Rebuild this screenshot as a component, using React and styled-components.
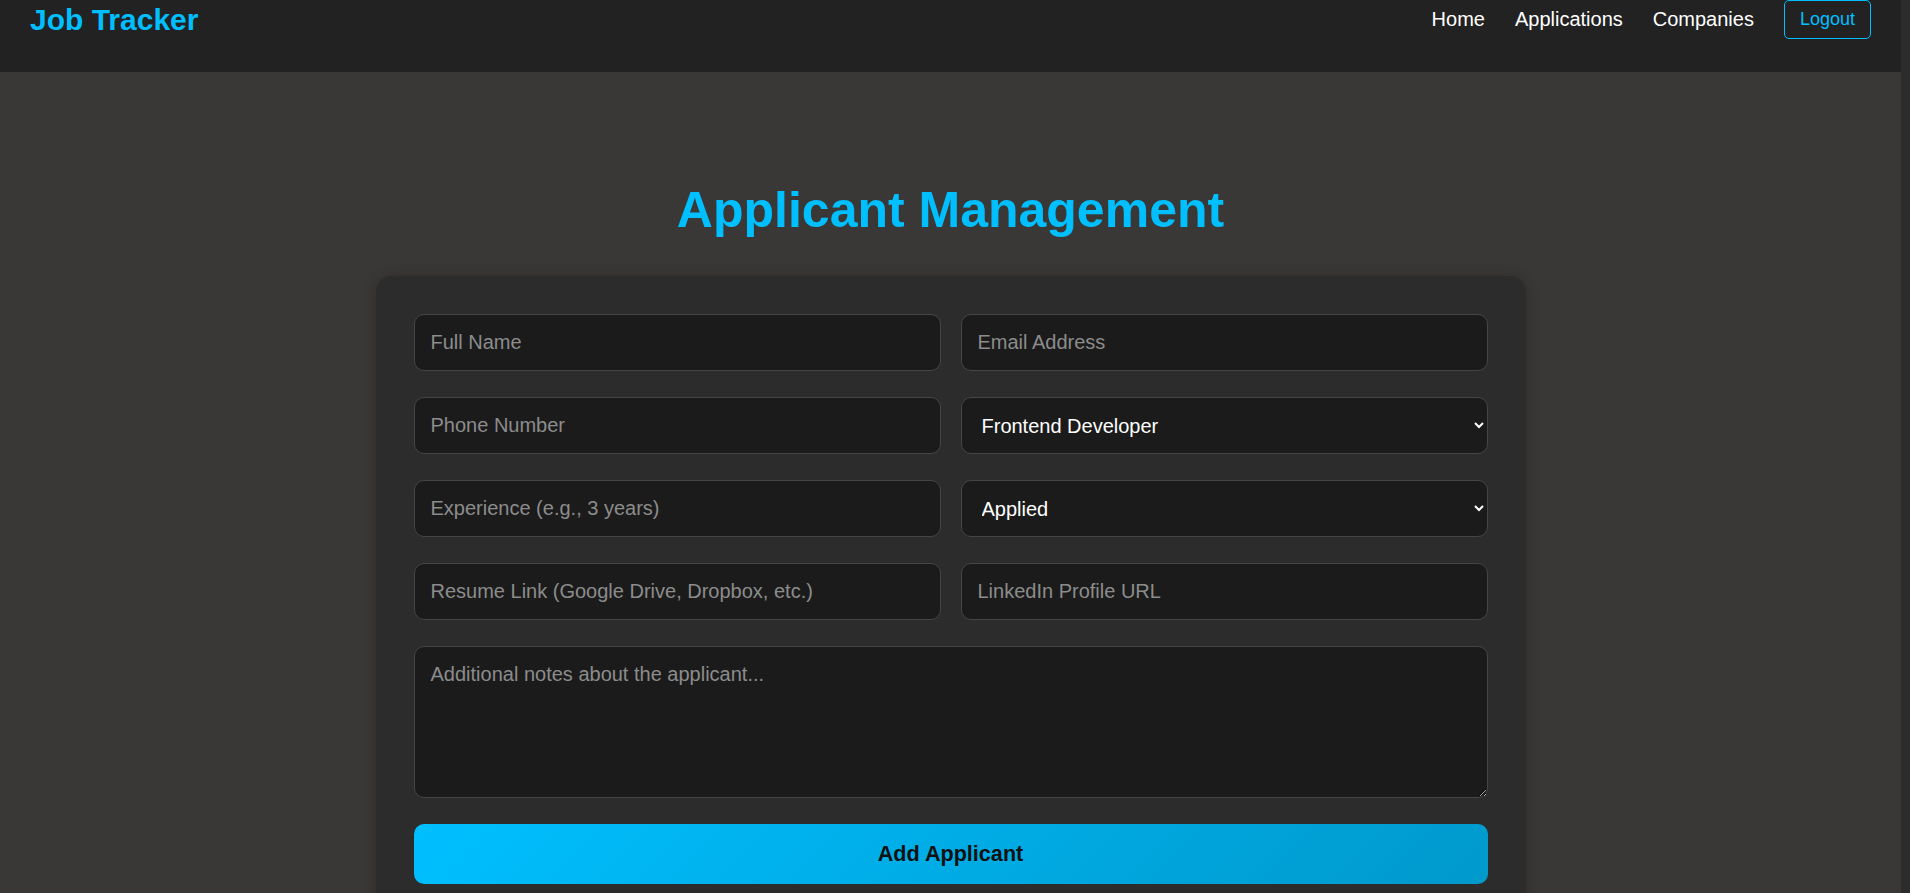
import React, { useState } from "react";
import styled, { createGlobalStyle } from "styled-components";

const GlobalStyle = createGlobalStyle`
    html {
        background-color: #2c2c2c;
    }
    body {
        margin: 0 9px 0 0;
        padding: 0;
        background-color: #3a3836;
        font-family: "Liberation Sans", Arial, sans-serif;
    }
    * {
        box-sizing: border-box;
    }
`;

const roles = ["Frontend Developer", "Backend Developer", "Full Stack Developer", "UI/UX Designer", "DevOps Engineer"];
const statuses = ["Applied", "Interviewing", "Offered", "Hired", "Rejected"];

const App = () => {
    const [form, setForm] = useState({
        name: "",
        email: "",
        phone: "",
        role: roles[0],
        experience: "",
        status: statuses[0],
        resume: "",
        linkedin: "",
        notes: "",
    });

    const update = (key) => (e) => setForm({...form, [key]: e.target.value});

    const submit = (e) => {
        e.preventDefault();
    };

    return (
        <StyledPage>
            <GlobalStyle/>
            <StyledNav>
                <StyledLogo>Job Tracker</StyledLogo>
                <StyledLinks>
                    <StyledLink href="#">Home</StyledLink>
                    <StyledLink href="#">Applications</StyledLink>
                    <StyledLink href="#">Companies</StyledLink>
                    <StyledLogout type="button">Logout</StyledLogout>
                </StyledLinks>
            </StyledNav>
            <StyledMain>
                <StyledTitle>Applicant Management</StyledTitle>
                <StyledCard>
                    <StyledForm onSubmit={submit}>
                        <StyledInput placeholder="Full Name" value={form.name} onChange={update("name")}/>
                        <StyledInput placeholder="Email Address" value={form.email} onChange={update("email")}/>
                        <StyledInput placeholder="Phone Number" value={form.phone} onChange={update("phone")}/>
                        <StyledSelect value={form.role} onChange={update("role")}>
                            {roles.map((r) => <option key={r}>{r}</option>)}
                        </StyledSelect>
                        <StyledInput placeholder="Experience (e.g., 3 years)" value={form.experience}
                                     onChange={update("experience")}/>
                        <StyledSelect value={form.status} onChange={update("status")}>
                            {statuses.map((s) => <option key={s}>{s}</option>)}
                        </StyledSelect>
                        <StyledInput placeholder="Resume Link (Google Drive, Dropbox, etc.)" value={form.resume}
                                     onChange={update("resume")}/>
                        <StyledInput placeholder="LinkedIn Profile URL" value={form.linkedin}
                                     onChange={update("linkedin")}/>
                        <StyledTextarea placeholder="Additional notes about the applicant..." value={form.notes}
                                        onChange={update("notes")}/>
                        <StyledSubmit type="submit">Add Applicant</StyledSubmit>
                    </StyledForm>
                </StyledCard>
            </StyledMain>
        </StyledPage>
    );
};

export default App;

const StyledPage = styled.div`
    min-height: 3270px;
    background-color: #3a3836;
`;

const StyledNav = styled.nav`
    height: 72px;
    padding: 0 30px;
    background-color: #222222;
    display: flex;
    justify-content: space-between;
    align-items: flex-start;
`;

const StyledLogo = styled.h1`
    margin: 0;
    height: 39px;
    display: flex;
    align-items: center;
    font-size: 30px;
    font-weight: bold;
    color: #00bfff;
`;

const StyledLinks = styled.div`
    height: 39px;
    display: flex;
    align-items: center;
    gap: 30px;
`;

const StyledLink = styled.a`
    font-size: 20px;
    color: #ffffff;
    text-decoration: none;
`;

const StyledLogout = styled.button`
    padding: 8px 15px;
    font-family: "Liberation Sans", Arial, sans-serif;
    font-size: 18px;
    color: #00bfff;
    background: transparent;
    border: 1px solid #00bfff;
    border-radius: 5px;
    cursor: pointer;
`;

const StyledMain = styled.main`
    padding: 110px 0 60px;
    display: flex;
    flex-direction: column;
    align-items: center;
`;

const StyledTitle = styled.h2`
    margin: 0 0 38px;
    font-size: 50px;
    font-weight: bold;
    line-height: 56px;
    color: #00bfff;
`;

const StyledCard = styled.div`
    width: 1150px;
    padding: 38px;
    background-color: #2c2c2c;
    border-radius: 16px;
    box-shadow: 0 0 14px rgba(0, 0, 0, .2);
`;

const StyledForm = styled.form`
    display: grid;
    grid-template-columns: 1fr 1fr;
    gap: 26px 20px;
`;

const fieldStyles = `
    width: 100%;
    padding: 16px;
    font-family: "Liberation Sans", Arial, sans-serif;
    font-size: 20px;
    line-height: 23px;
    color: #ffffff;
    background-color: #1b1b1b;
    border: 1px solid #454545;
    border-radius: 10px;
    outline: none;

    &::placeholder {
        color: #8c8c8c;
    }
`;

const StyledInput = styled.input`
    ${fieldStyles}
`;

const StyledSelect = styled.select`
    ${fieldStyles}
    height: 57px;
    color-scheme: dark;
`;

const StyledTextarea = styled.textarea`
    ${fieldStyles}
    grid-column: 1 / -1;
    height: 152px;
    resize: vertical;
    color-scheme: dark;
`;

const StyledSubmit = styled.button`
    grid-column: 1 / -1;
    padding: 18px;
    font-family: "Liberation Sans", Arial, sans-serif;
    font-size: 21.6px;
    line-height: 24px;
    font-weight: bold;
    color: #111111;
    background: linear-gradient(135deg, #00bfff 0%, #0099cc 100%);
    border: 0;
    border-radius: 10px;
    cursor: pointer;
`;
